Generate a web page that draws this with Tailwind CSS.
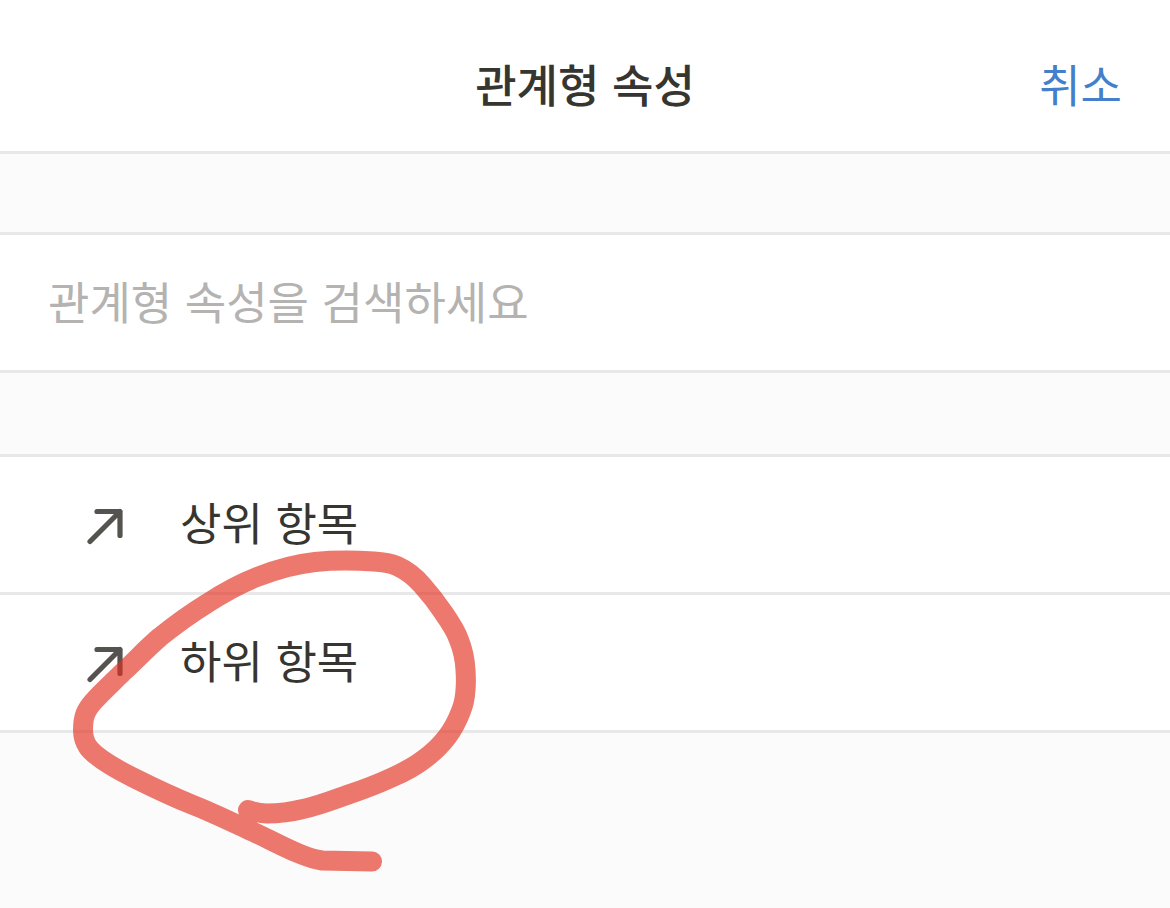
<!DOCTYPE html>
<html lang="ko" class="h-full">
<head>
  <meta charset="UTF-8">
  <meta name="viewport" content="width=device-width, initial-scale=1.0">
  <title>관계형 속성</title>
  <script src="https://cdn.jsdelivr.net/npm/@tailwindcss/browser@4"></script>
</head>
<body class="relative min-h-full bg-[#fbfbfb] font-['Noto_Sans_CJK_KR',sans-serif] text-[45px] leading-[66px] text-[#373530]">
  <header class="grid grid-cols-[1fr_auto_1fr] items-center bg-white border-b-3 border-[#e8e8e8] px-12 pt-[51px] pb-[34px]">
    <h1 class="col-start-2 font-medium">관계형 속성</h1>
    <button type="button" class="justify-self-end text-[#447fcc]">취소</button>
  </header>

  <main>
    <div class="mt-[78px] bg-white border-y-3 border-[#e8e8e8]">
      <input type="search" aria-label="관계형 속성 검색" placeholder="관계형 속성을 검색하세요" class="block w-full h-[135px] px-12 pb-1 outline-none placeholder:text-[#b4b3b1]">
    </div>

    <ul class="mt-[81px] bg-white border-y-3 border-[#e8e8e8] divide-y-3 divide-[#e8e8e8]">
      <li>
        <button type="button" class="flex w-full h-[135px] items-center gap-[55px] pl-[85px] text-left">
          <svg class="size-10" viewBox="0 0 40 40" fill="none" stroke="#555350" stroke-width="5.2" stroke-linecap="round" stroke-linejoin="round" aria-hidden="true">
            <path d="M5 36.500 35 6.500M12 6.500h23v24" />
          </svg>
          <span class="pb-1.5">상위 항목</span>
        </button>
      </li>
      <li>
        <button type="button" class="flex w-full h-[135px] items-center gap-[55px] pl-[85px] text-left">
          <svg class="size-10" viewBox="0 0 40 40" fill="none" stroke="#555350" stroke-width="5.2" stroke-linecap="round" stroke-linejoin="round" aria-hidden="true">
            <path d="M5 36.500 35 6.500M12 6.500h23v24" />
          </svg>
          <span class="pb-1.5">하위 항목</span>
        </button>
      </li>
    </ul>
  </main>

  <!-- marker stroke around the second item -->
  <svg class="absolute left-[60px] top-[540px] w-[430px] h-[350px] pointer-events-none" viewBox="60 540 430 350" fill="none" stroke="#e22f20" stroke-opacity=".65" stroke-width="20" stroke-linecap="round" stroke-linejoin="round" aria-hidden="true">
    <path d="M372 861.5 L322 860.5 C302 858 272 840 247 829 C229 821 211 812 193 805 C173 797 152 787 133 777.5 C118 770 96 758 88 747 C84 741 83 736 83 730 C83 716 86 710 93 702 C102 692 113 682 123 672 C135 661 147 648 160 637 C175 625 190 614 207 603.5 C223 593 239 584 257 577 C275 570 296 564 315 562 C330 560.5 358 560.500 374 561.5 C384 562 390 563 397 566 C406 570 415 577 422 585 C430 594 437 603 443 612 C450 622 456 631 459 640 C463 650 465 660 465.500 670 C466 677 466 684 465.500 690 C465 698 464 704 461 711 C458 719 453 729 447 737 C440 746 433 753 423 760 C414 767 404 772 393 777 C378 784 362 790 347 795 C333 800 318 806 303 809 C291 812 279 813.500 267 813.500 C260 813.500 254 812 248 810" />
  </svg>
</body>
</html>
